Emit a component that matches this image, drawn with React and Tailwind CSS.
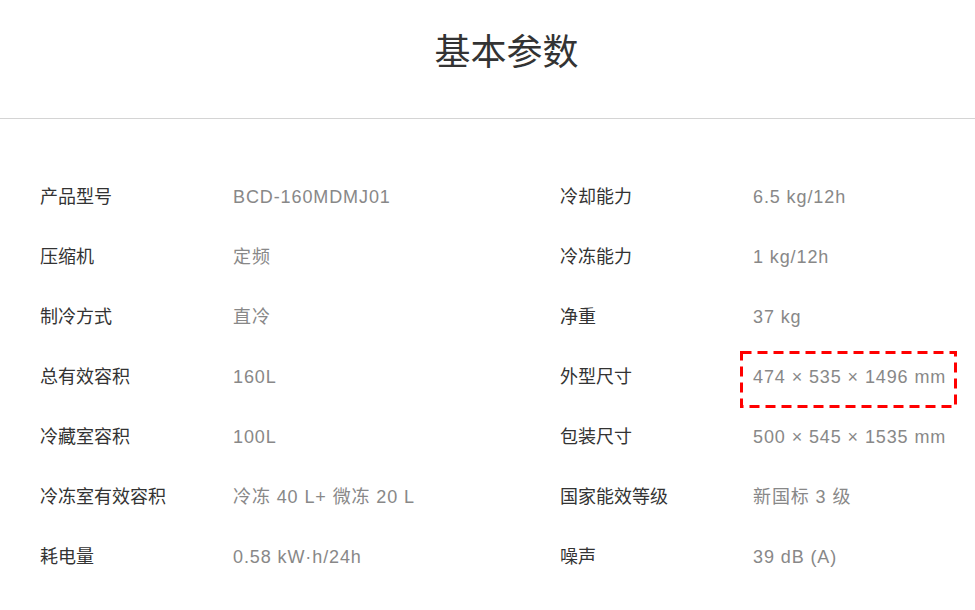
import React from 'react'

const rows = [
  ['产品型号', 'BCD-160MDMJ01', '冷却能力', '6.5 kg/12h'],
  ['压缩机', '定频', '冷冻能力', '1 kg/12h'],
  ['制冷方式', '直冷', '净重', '37 kg'],
  ['总有效容积', '160L', '外型尺寸', '474 × 535 × 1496 mm'],
  ['冷藏室容积', '100L', '包装尺寸', '500 × 545 × 1535 mm'],
  ['冷冻室有效容积', '冷冻 40 L+ 微冻 20 L', '国家能效等级', '新国标 3 级'],
  ['耗电量', '0.58 kW·h/24h', '噪声', '39 dB (A)'],
]

function Cell({label, value, marked}){
  return (
    <div className="flex items-center h-[60px]">
      <div className="w-[193px] shrink-0 text-[#333]">{label}</div>
      <div className="relative whitespace-nowrap text-[#888] tracking-[0.9px]">
        {value}
        {marked && (
          <svg className="absolute left-[-13px] top-[-13px] pointer-events-none" width="217" height="57" viewBox="0 0 217 57">
            <rect x="1.5" y="1.5" width="214" height="54" fill="none" stroke="#f00" strokeWidth="3" strokeDasharray="10 6" />
          </svg>
        )}
      </div>
    </div>
  )
}

export default function App(){
  return (
    <div className="w-[975px] h-[610px] bg-white overflow-hidden" style={{fontFamily: '"Liberation Sans", "Noto Sans CJK SC", sans-serif'}}>
      <div className="h-[119px] border-b border-[#d4d4d4] flex justify-center pt-[30px] pl-[38px]">
        <h1 className="text-[36px] leading-[38px] text-[#333]" style={{fontFamily: '"Noto Sans CJK SC", sans-serif'}}>基本参数</h1>
      </div>
      <div className="pt-[48px] px-[40px] text-[18px]">
        {rows.map(r => (
          <div key={r[0]} className="grid grid-cols-[520px_1fr]">
            <Cell label={r[0]} value={r[1]} />
            <Cell label={r[2]} value={r[3]} marked={r[2] === '外型尺寸'} />
          </div>
        ))}
      </div>
    </div>
  )
}
